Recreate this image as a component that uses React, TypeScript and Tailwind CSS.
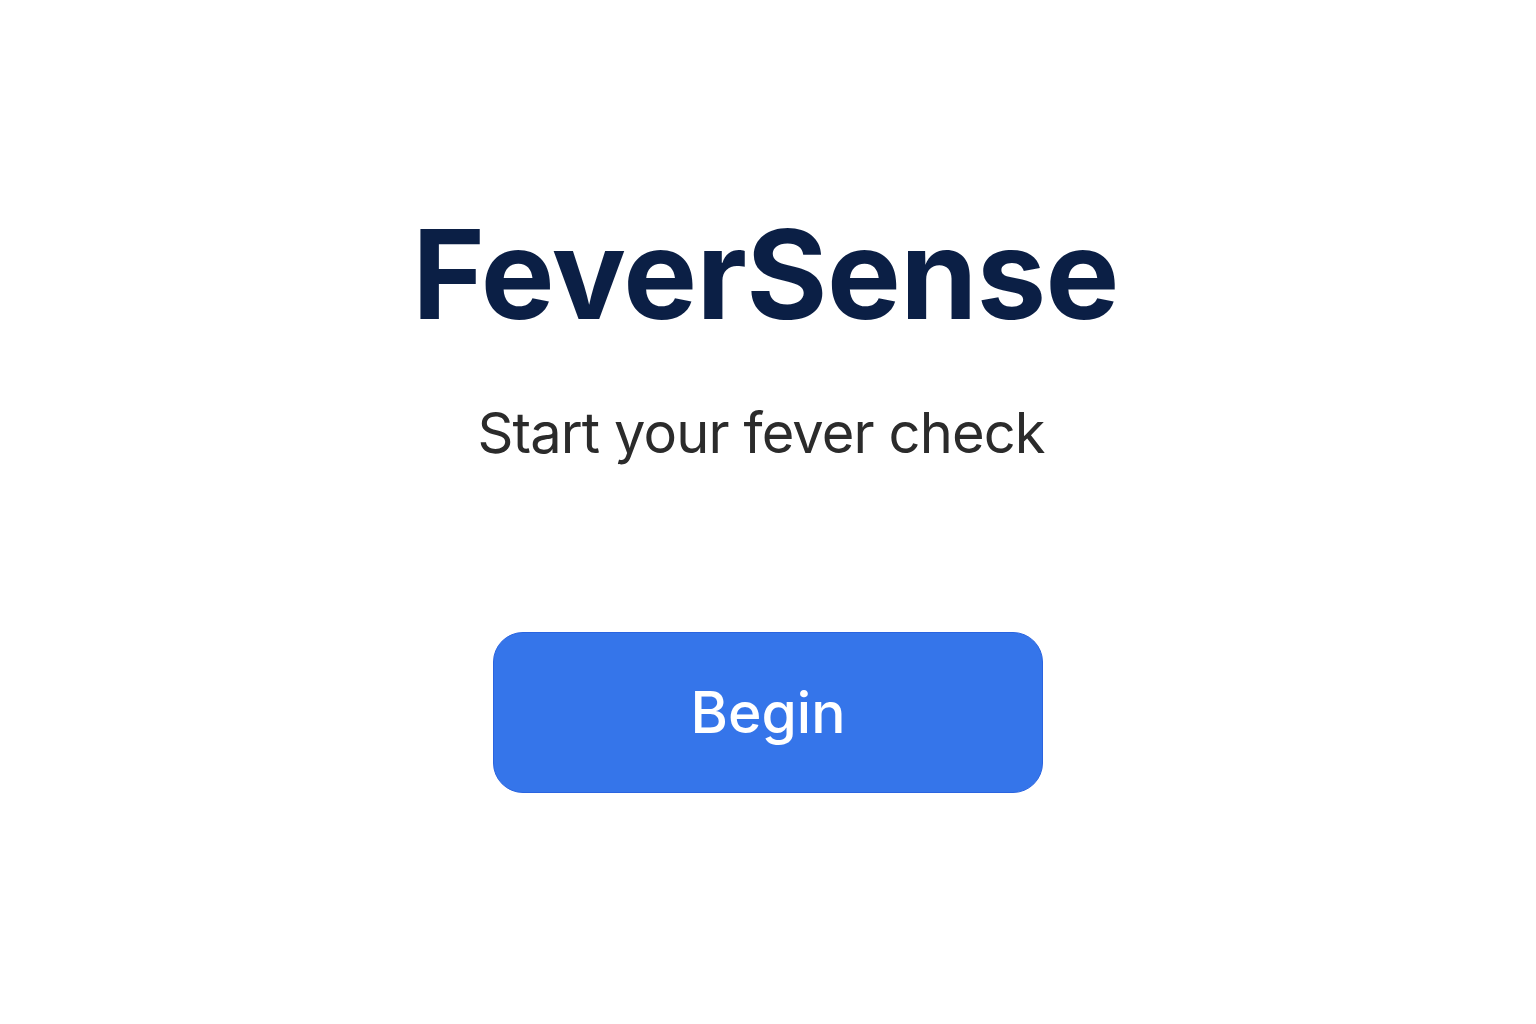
export default function App() {
  return (
    <main className="min-h-screen bg-white flex flex-col items-center pt-[212px] font-['Inter',sans-serif]">
      <h1 className="pr-[5px] text-[124px] leading-none font-bold text-[#0b1f45] tracking-[-0.005em]">FeverSense</h1>
      <p className="mt-[69px] pr-[14px] text-[56px] leading-none text-[#2b2b2b] tracking-[-0.016em]">Start your fever check</p>
      <button className="mt-[171px] w-[550px] h-[161px] rounded-[30px] bg-[#3575ea] border border-[#2a64e0] text-white text-[57px] font-medium">
        Begin
      </button>
    </main>
  )
}
